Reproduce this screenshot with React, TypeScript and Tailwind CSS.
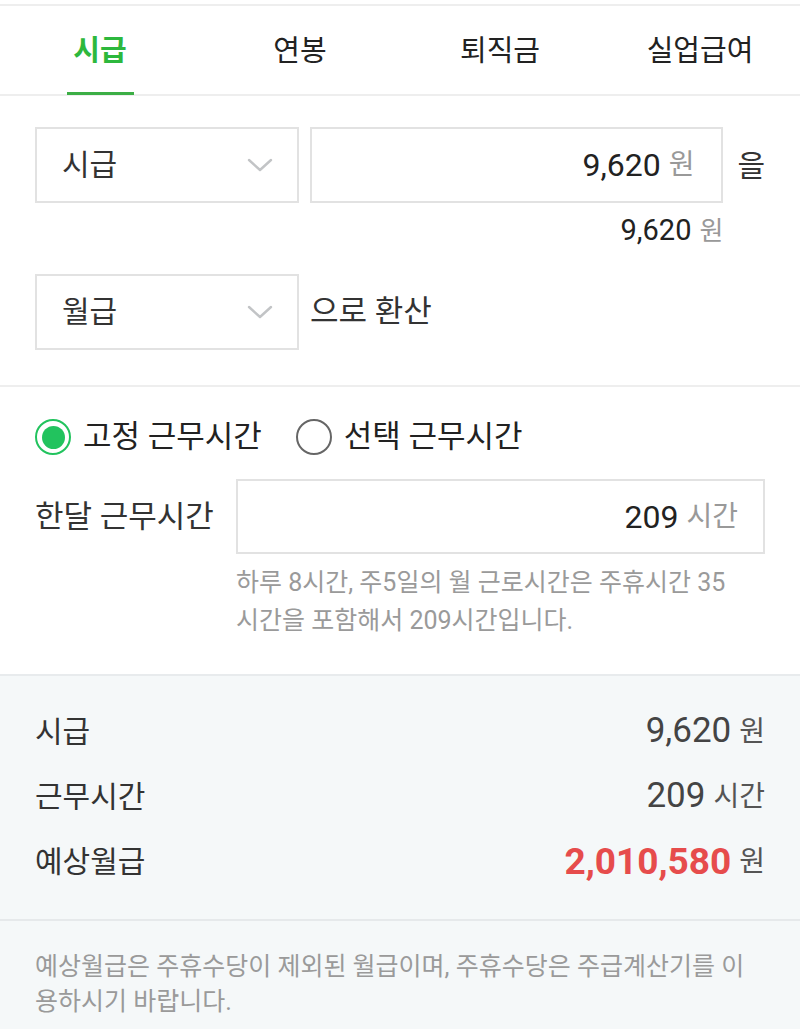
import { useState } from "react"

const tabs = ["시급", "연봉", "퇴직금", "실업급여"]

function Chevron() {
  return (
    <svg width="26" height="14" viewBox="0 0 26 14" fill="none" className="shrink-0">
      <path d="M2 2 L13 12 L24 2" stroke="#c2c4c6" strokeWidth="2.4" strokeLinecap="round" strokeLinejoin="round" />
    </svg>
  )
}

function SelectBox({ label }: { label: string }) {
  return (
    <div className="flex h-[76px] w-[264px] shrink-0 items-center justify-between border-2 border-[#e2e2e2] pl-[25px] pr-[24px]">
      <span className="text-[30px] leading-[40px] text-[#333]">{label}</span>
      <Chevron />
    </div>
  )
}

function Radio({ checked, label }: { checked: boolean; label: string }) {
  return (
    <label className="flex items-center gap-[12px]">
      {checked ? (
        <span className="flex h-[36px] w-[36px] items-center justify-center rounded-full border-2 border-[#22c35e] bg-white">
          <span className="h-[23px] w-[23px] rounded-full bg-[#22c35e]" />
        </span>
      ) : (
        <span className="h-[36px] w-[36px] rounded-full border-2 border-[#666] bg-white" />
      )}
      <span className="text-[31px] leading-[40px] text-[#222]">{label}</span>
    </label>
  )
}

export default function App() {
  const [active] = useState(0)

  return (
    <div className="flex min-h-screen w-full flex-col bg-white font-['Roboto','Noto_Sans_CJK_KR',sans-serif] pt-[4px]">
      {/* tabs */}
      <nav className="grid grid-cols-4 border-y-2 border-[#eeeeee] bg-white">
        {tabs.map((t, i) => (
          <div key={t} className="relative flex h-[88px] items-center justify-center pt-[4px]">
            <span className={i === active ? "text-[29px] font-bold text-[#2db83d]" : "text-[29px] text-[#222]"}>{t}</span>
            {i === active && <span className="absolute bottom-[-1px] left-[67px] h-[3px] w-[67px] bg-[#3cae45]" />}
          </div>
        ))}
      </nav>

      {/* conversion */}
      <section className="bg-white px-[35px] pt-[31px] pb-[35px]">
        <div className="flex items-center">
          <SelectBox label="시급" />
          <div className="ml-[11px] flex h-[76px] flex-1 items-center justify-end gap-[8px] border-2 border-[#e2e2e2] pr-[27px]">
            <span className="text-[32px] text-[#222]">9,620</span>
            <span className="text-[28px] text-[#999]">원</span>
          </div>
          <span className="ml-[14px] text-[30px] text-[#333]">을</span>
        </div>
        <div className="mt-[8px] flex h-[40px] items-center">
          <div className="flex flex-1 items-center justify-end gap-[8px]">
            <span className="text-[29px] text-[#222]">9,620</span>
            <span className="text-[26px] text-[#999]">원</span>
          </div>
          <span className="invisible ml-[14px] text-[30px]">을</span>
        </div>
        <div className="mt-[23px] flex items-center">
          <SelectBox label="월급" />
          <span className="ml-[11px] text-[31px] leading-[40px] text-[#333]">으로 환산</span>
        </div>
      </section>

      {/* work hours */}
      <section className="border-t-2 border-[#eeeeee] bg-white px-[35px] pt-[30px] pb-[34px]">
        <div className="flex items-center gap-[34px]">
          <Radio checked label="고정 근무시간" />
          <Radio checked={false} label="선택 근무시간" />
        </div>
        <div className="mt-[22px] flex items-center">
          <span className="w-[201px] shrink-0 text-[31px] leading-[40px] text-[#333]">한달 근무시간</span>
          <div className="flex h-[75px] flex-1 items-center justify-end gap-[8px] border-2 border-[#e2e2e2] pr-[25px]">
            <span className="text-[32px] text-[#222]">209</span>
            <span className="text-[28px] text-[#999]">시간</span>
          </div>
        </div>
        <p className="mt-[10px] ml-[201px] break-keep text-[25px] leading-[38px] text-[#9a9a9a]">
          하루 8시간, 주5일의 월 근로시간은 주휴시간 35 시간을 포함해서 209시간입니다.
        </p>
      </section>

      {/* summary */}
      <section className="border-t-2 border-[#e8ebed] bg-[#f5f8f9] px-[35px] pt-[23px] pb-[25px]">
        <div className="flex h-[65px] items-center justify-between">
          <span className="text-[30px] text-[#333]">시급</span>
          <span className="flex items-center gap-[8px]">
            <span className="text-[35px] text-[#444]">9,620</span>
            <span className="text-[28px] text-[#555]">원</span>
          </span>
        </div>
        <div className="flex h-[65px] items-center justify-between">
          <span className="text-[30px] text-[#333]">근무시간</span>
          <span className="flex items-center gap-[8px]">
            <span className="text-[35px] text-[#444]">209</span>
            <span className="text-[28px] text-[#555]">시간</span>
          </span>
        </div>
        <div className="flex h-[65px] items-center justify-between">
          <span className="text-[30px] text-[#333]">예상월급</span>
          <span className="flex items-center gap-[8px]">
            <span className="text-[37px] font-bold text-[#e64c4c]">2,010,580</span>
            <span className="text-[28px] text-[#555]">원</span>
          </span>
        </div>
      </section>

      {/* note */}
      <section className="flex-1 border-t-2 border-[#e6e9eb] bg-[#f5f8f9] px-[35px] pt-[28px] pb-[20px]">
        <p className="text-[25px] leading-[35px] text-[#9a9a9a]">
          예상월급은 주휴수당이 제외된 월급이며, 주휴수당은 주급계산기를 이용하시기 바랍니다.
        </p>
      </section>
    </div>
  )
}
